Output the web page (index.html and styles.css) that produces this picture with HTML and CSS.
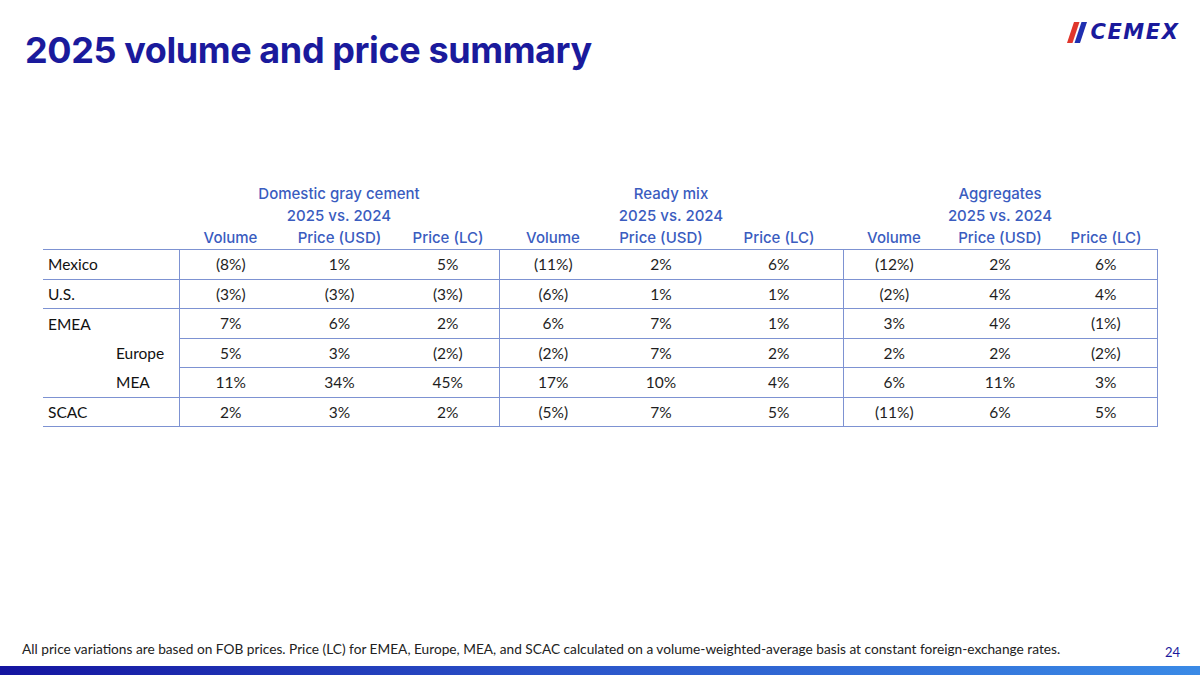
FILE: index.html
```html
<!DOCTYPE html>
<html>
<head>
<meta charset="utf-8">
<link rel="stylesheet" href="styles.css">
</head>
<body>
<div class="slide">
  <header class="top">
    <h1 class="title">2025 volume and price summary</h1>
    <div class="logo">
      <svg class="logo-mark" width="21" height="21" viewBox="0 0 21 21">
        <polygon points="7,0 12.5,0 5.5,21 0,21" fill="#e0362c"/>
        <polygon points="14.5,0 20,0 13,21 7.5,21" fill="#1f2fb0"/>
      </svg>
      <span class="logo-text">CEMEX</span>
    </div>
  </header>

  <main class="content">
    <table class="summary">
      <colgroup>
        <col style="width:136px">
        <col style="width:103px"><col style="width:115px"><col style="width:102px">
        <col style="width:108px"><col style="width:108px"><col style="width:128px">
        <col style="width:102px"><col style="width:110px"><col style="width:102px">
      </colgroup>
      <thead>
        <tr class="grp">
          <th></th>
          <th colspan="3">Domestic gray cement<br>2025 vs. 2024</th>
          <th colspan="3">Ready mix<br>2025 vs. 2024</th>
          <th colspan="3">Aggregates<br>2025 vs. 2024</th>
        </tr>
        <tr class="sub">
          <th></th>
          <th>Volume</th><th>Price (USD)</th><th>Price (LC)</th>
          <th>Volume</th><th>Price (USD)</th><th>Price (LC)</th>
          <th>Volume</th><th>Price (USD)</th><th>Price (LC)</th>
        </tr>
      </thead>
      <tbody>
        <tr>
          <td class="lbl">Mexico</td>
          <td class="g">(8%)</td><td>1%</td><td>5%</td>
          <td class="g">(11%)</td><td>2%</td><td>6%</td>
          <td class="g">(12%)</td><td>2%</td><td class="e">6%</td>
        </tr>
        <tr>
          <td class="lbl">U.S.</td>
          <td class="g">(3%)</td><td>(3%)</td><td>(3%)</td>
          <td class="g">(6%)</td><td>1%</td><td>1%</td>
          <td class="g">(2%)</td><td>4%</td><td class="e">4%</td>
        </tr>
        <tr>
          <td class="lbl">EMEA</td>
          <td class="g">7%</td><td>6%</td><td>2%</td>
          <td class="g">6%</td><td>7%</td><td>1%</td>
          <td class="g">3%</td><td>4%</td><td class="e">(1%)</td>
        </tr>
        <tr>
          <td class="lbl sublbl">Europe</td>
          <td class="g">5%</td><td>3%</td><td>(2%)</td>
          <td class="g">(2%)</td><td>7%</td><td>2%</td>
          <td class="g">2%</td><td>2%</td><td class="e">(2%)</td>
        </tr>
        <tr>
          <td class="lbl sublbl">MEA</td>
          <td class="g">11%</td><td>34%</td><td>45%</td>
          <td class="g">17%</td><td>10%</td><td>4%</td>
          <td class="g">6%</td><td>11%</td><td class="e">3%</td>
        </tr>
        <tr class="last">
          <td class="lbl">SCAC</td>
          <td class="g">2%</td><td>3%</td><td>2%</td>
          <td class="g">(5%)</td><td>7%</td><td>5%</td>
          <td class="g">(11%)</td><td>6%</td><td class="e">5%</td>
        </tr>
      </tbody>
    </table>
  </main>

  <footer class="foot">
    <p class="note">All price variations are based on FOB prices. Price (LC) for EMEA, Europe, MEA, and SCAC calculated on a volume-weighted-average basis at constant foreign-exchange rates.</p>
    <span class="page">24</span>
  </footer>
  <div class="bar"></div>
</div>
</body>
</html>
```

FILE: styles.css
```css
* { box-sizing: border-box; }
html, body { margin: 0; padding: 0; background: #fff; }
body { font-family: "Lato", "Liberation Sans", sans-serif; color: #1e1e1e; }

.slide {
  width: 1200px;
  height: 675px;
  display: flex;
  flex-direction: column;
  overflow: hidden;
}

.top {
  display: flex;
  justify-content: space-between;
  align-items: flex-start;
  padding: 0 22px 0 25px;
  height: 183px;
}
.title {
  margin: 28px 0 0 0;
  font-family: "Inter", "Lato", sans-serif;
  font-size: 36px;
  font-weight: 700;
  color: #1a1a9c;
  letter-spacing: -0.4px;
  line-height: 44px;
}
.logo {
  margin-top: 22px;
  display: flex;
  align-items: center;
  gap: 2px;
}
.logo-mark { display: block; }
.logo-text {
  font-family: "DejaVu Sans", "Liberation Sans", sans-serif;
  font-weight: 700;
  font-style: oblique;
  font-size: 21px;
  color: #1a1a9c;
  letter-spacing: 1.6px;
  line-height: 21px;
  margin-right: -1.6px;
}

.content {
  flex: 1;
  padding-left: 43px;
}
.summary {
  border-collapse: collapse;
  table-layout: fixed;
  width: 1114px;
  font-size: 15.5px;
}
.summary th {
  font-family: "Inter", "Lato", sans-serif;
  color: #3a5cbf;
  font-weight: 500;
  font-size: 15px;
  text-align: center;
  padding: 0;
}
.grp th { line-height: 22px; }
.sub th { line-height: 22px; height: 22px; vertical-align: middle; }

.summary td {
  height: 29.5px;
  padding: 0;
  text-align: center;
  border-top: 1px solid #7d92d2;
  line-height: 18px;
}
.summary td.g { border-left: 1px solid #7d92d2; }
.summary td.e { border-right: 1px solid #7d92d2; }
.summary tr.last td { border-bottom: 1px solid #7d92d2; }
.summary td.lbl {
  text-align: left;
  padding-left: 5px;
  color: #111;
}
.summary td.sublbl {
  padding-left: 73px;
  border-top: none;
}

.foot {
  display: flex;
  justify-content: space-between;
  align-items: center;
  padding: 0 20px 0 22px;
  height: 36px;
  margin-top: 3px;
}
.note {
  margin: 0;
  font-size: 13.7px;
  color: #222;
}
.page {
  font-size: 13px;
  color: #1a1a9c;
  padding-top: 8px;
}
.bar {
  height: 9px;
  background: linear-gradient(90deg, #1414a0 0%, #2a52c8 45%, #3a8ae6 100%);
}
```
